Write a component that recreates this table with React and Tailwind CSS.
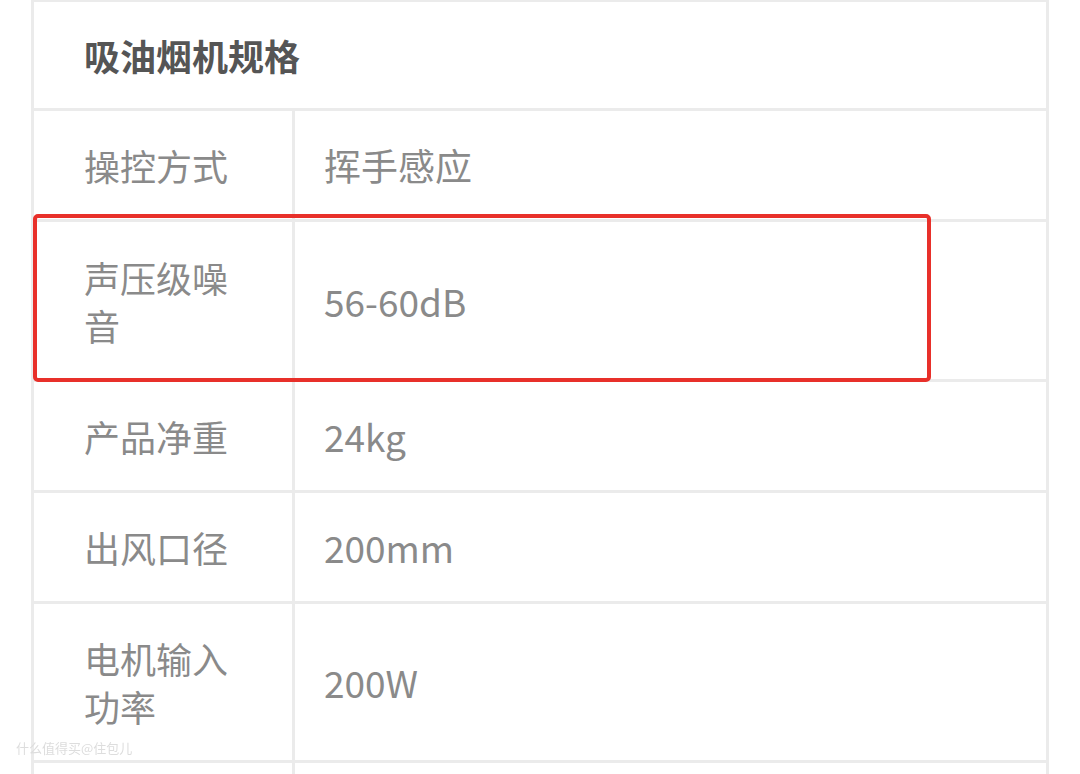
import React from 'react';

const rows = [
    { label: '操控方式', value: '挥手感应', h: 'h-[111px]' },
    { label: '声压级噪音', value: '56-60dB', h: 'h-[160px]', highlight: true },
    { label: '产品净重', value: '24kg', h: 'h-[111px]' },
    { label: '出风口径', value: '200mm', h: 'h-[111px]' },
    { label: '电机输入功率', value: '200W', h: 'h-[159px]' },
    { label: '', value: '', h: 'h-[40px]' },
];

function SpecRow({ row }) {
    return (
        <div className={`relative flex ${row.h} border-b-[3px] border-[#ebebeb]`}>
            <div className="w-[261px] shrink-0 flex items-center pl-[50px] pr-[40px] border-r-[3px] border-[#ebebeb]">
                <span className="text-[36px] leading-[48px] text-[#8a8a8a] break-all">{row.label}</span>
            </div>
            <div className="flex-1 flex items-center pl-[29px]">
                <span className="text-[37px] leading-[48px] text-[#8a8a8a]">{row.value}</span>
            </div>
            {row.highlight && (
                <div className="absolute left-[-1px] top-[-8px] w-[898px] h-[168px] border-[4px] border-[#e8302a] rounded-[5px]"></div>
            )}
        </div>
    );
}

export default function App() {
    return (
        <div className="relative w-[1080px] h-[774px] overflow-hidden bg-white"
            style={{ fontFamily: '"Noto Sans CJK SC", "Noto Sans", sans-serif' }}>
            <div className="ml-[31px] w-[1018px] border-x-[3px] border-t-[2px] border-[#ebebeb]">
                <div className="h-[109px] flex items-center pl-[50px] border-b-[3px] border-[#ebebeb]">
                    <h4 className="text-[36px] font-bold text-[#555555]">吸油烟机规格</h4>
                </div>
                {rows.map((row, i) => (
                    <SpecRow key={i} row={row} />
                ))}
            </div>
            <div className="absolute left-[16px] top-[738px] text-[13px] text-[#dddddd] blur-[0.5px]">什么值得买@住包儿</div>
        </div>
    );
}
